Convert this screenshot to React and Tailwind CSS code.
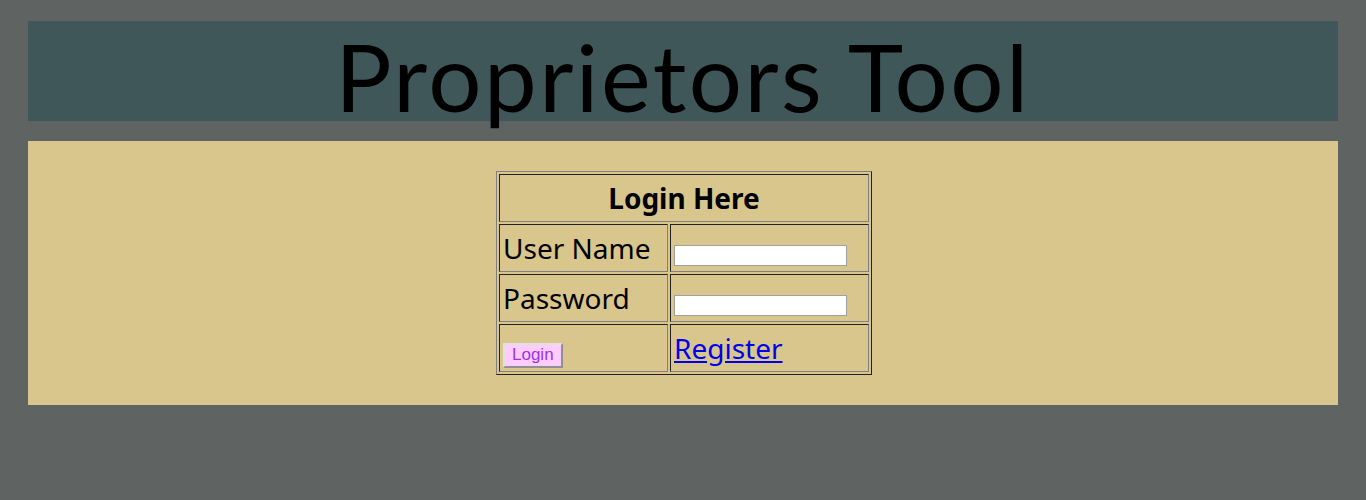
export default function App() {
  const cellA = "border border-t-[#222] border-l-[#222] border-b-[#808080] border-r-[#808080] p-px";
  return (
    <div className="min-h-[500px] bg-[#5f6463] pt-[21px] px-[28px]">
      <div className="h-[100px] bg-[#3f5759] flex justify-center">
        <h1 className="text-black text-[94px] leading-[100px] tracking-[2.5px] pt-[5px] whitespace-nowrap" style={{ fontFamily: "Lato, 'Open Sans', sans-serif" }}>
          Proprietors Tool
        </h1>
      </div>
      <div className="mt-[20px] h-[264px] bg-[#d9c68c] pt-[30px] pl-[2px] flex justify-center">
        <div className="self-start" style={{ fontFamily: "'Noto Sans', 'Open Sans', sans-serif" }}>
          <table className="border border-t-[#808080] border-l-[#808080] border-b-[#222] border-r-[#222] border-separate border-spacing-[2px] text-[28px] text-black">
            <tbody>
              <tr>
                <td colSpan={2} className={`${cellA} h-[48px] text-center font-bold`}>Login Here</td>
              </tr>
              <tr>
                <td className={`${cellA} h-[48px] w-[169px] pl-[3px]`}>User Name</td>
                <td className={`${cellA} h-[48px] w-[199px] pl-[3px]`}>
                  <input type="text" className="w-[173px] h-[21px] bg-white border border-[#a0a0a0] align-[-7px]" />
                </td>
              </tr>
              <tr>
                <td className={`${cellA} h-[48px] pl-[3px]`}>Password</td>
                <td className={`${cellA} h-[48px] pl-[3px]`}>
                  <input type="password" className="w-[173px] h-[21px] bg-white border border-[#a0a0a0] align-[-7px]" />
                </td>
              </tr>
              <tr>
                <td className={`${cellA} h-[48px] pl-[3px]`}>
                  <button className="bg-[#ffccff] text-[#9933ee] text-[17px] px-[7px] h-[25px] leading-[20px] border-2 border-t-[#e0e0e0] border-l-[#e0e0e0] border-b-[#909090] border-r-[#909090] align-[-1px]" style={{ fontFamily: "Arial, 'Liberation Sans', sans-serif" }}>
                    Login
                  </button>
                </td>
                <td className={`${cellA} h-[48px] pl-[3px]`}>
                  <a href="#" className="text-[#0000ee] underline">Register</a>
                </td>
              </tr>
            </tbody>
          </table>
        </div>
      </div>
    </div>
  );
}
